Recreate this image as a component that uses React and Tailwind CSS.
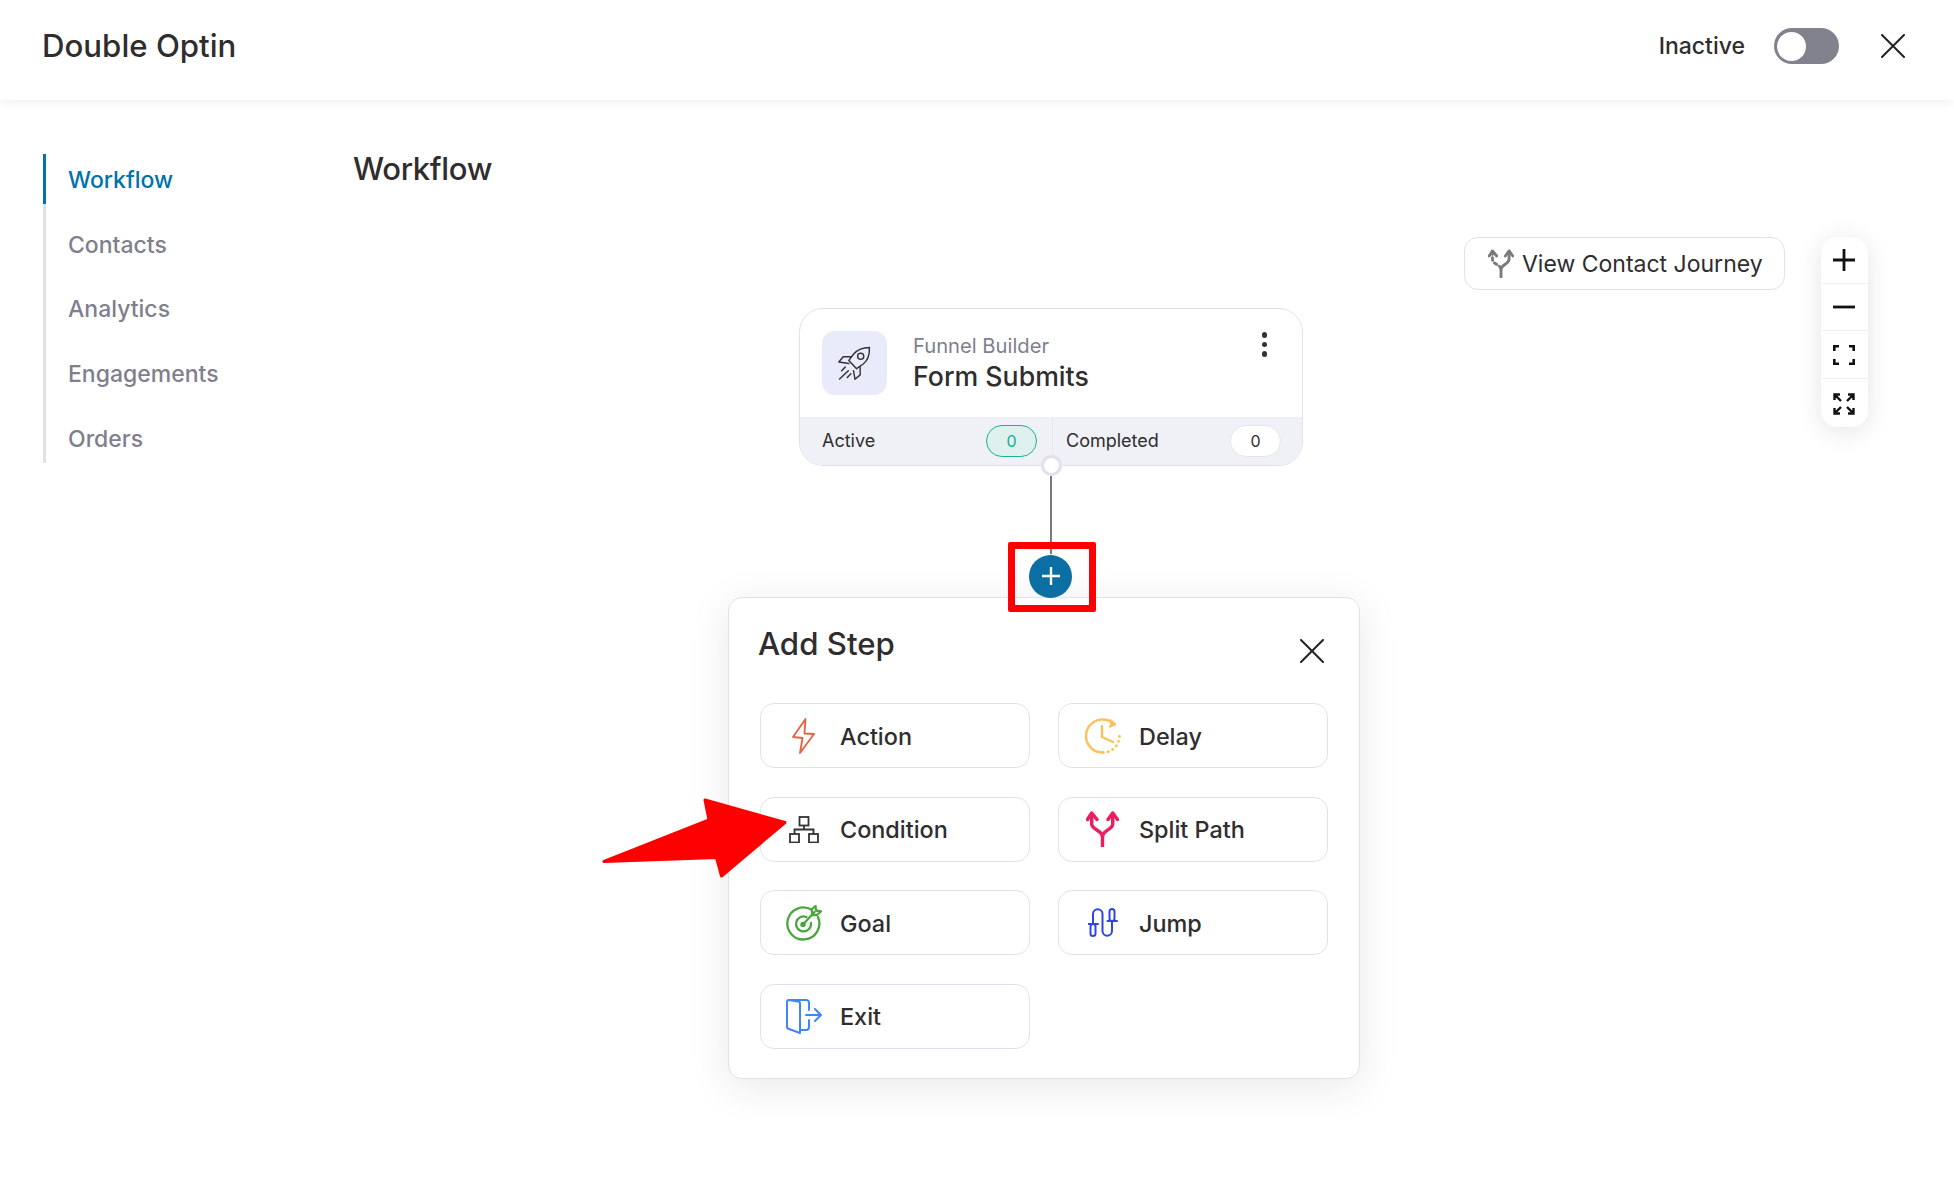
import React from "react";

const X = ({ className }) => (
  <svg viewBox="0 0 24 24" className={className} fill="none" stroke="#222" strokeWidth="2" strokeLinecap="round">
    <path d="M1 1L23 23M23 1L1 23" />
  </svg>
);

const Rocket = () => (
  <svg viewBox="0 0 32 33" className="w-[33px] h-[34px]" fill="none" stroke="#333" strokeWidth="1.4" strokeLinecap="round" strokeLinejoin="round">
    <path d="M30.5 1.5C24 1.5 19 3.5 15 8L10.5 14L18 22L24.5 17.5C29 14 30.8 9 30.5 1.5Z" />
    <circle cx="22" cy="10" r="3" />
    <path d="M13 10.5L5 10.5L0.8 15.5L10.5 17" />
    <path d="M21.5 20L21.5 28L16.5 32.3L15 24" />
    <path d="M7 20.5L3.5 24M10 24L1.5 32M12.5 27L9 30.5" />
  </svg>
);

const Bolt = () => (
  <svg viewBox="0 0 23 36" className="w-[23px] h-[36px]" fill="none" stroke="#e8603c" strokeWidth="1.8" strokeLinejoin="round">
    <path d="M13.5 1L1 19L10.5 20L8 35L22 16L12.5 15.5Z" />
  </svg>
);

const Network = () => (
  <svg viewBox="0 0 30 27" className="w-[30px] h-[27px]" fill="none" stroke="#333" strokeWidth="1.8">
    <rect x="10.5" y="1" width="9" height="8.5" />
    <rect x="1" y="18" width="9" height="8.5" />
    <rect x="20" y="18" width="9" height="8.5" />
    <path d="M15 9.5V13.5M5.5 18V13.5H24.5V18" />
  </svg>
);

const Clock = () => (
  <svg viewBox="0 0 36 36" className="w-[36px] h-[36px]" fill="none" stroke="#fcc15a" strokeWidth="2.4" strokeLinecap="round" strokeLinejoin="round">
    <path d="M29 6.2A16.5 16.5 0 1 0 18 34.5" />
    <path d="M18 34.5A16.5 16.5 0 0 0 34.5 18V15" strokeDasharray="0.5 4.5" strokeWidth="2.6" />
    <path d="M25.5 2.5L30 6.5L25 8.5" fill="#fcc15a" />
    <path d="M17 8V19L28 24" />
  </svg>
);

const Split = ({ className, color, dashed, width = 3.4 }) => (
  <svg viewBox="0 0 33 36" className={className} fill="none" stroke={color} strokeWidth={width} strokeLinecap="round" strokeLinejoin="round">
    <path d="M1.5 8.5L5.7 2L11 8.5" />
    <path d="M22 8.5L26.7 2L31.5 8.5" />
    <path d="M5.7 3V13C5.7 19 16.5 19 16.5 26" strokeDasharray={dashed ? "3.5 4" : undefined} />
    <path d="M26.7 3V13C26.7 19 16.5 19 16.5 26V35" />
  </svg>
);

const Goal = () => (
  <svg viewBox="0 0 36 36" className="w-[36px] h-[36px]" fill="none" stroke="#4ca63f" strokeWidth="2.3" strokeLinecap="round" strokeLinejoin="round">
    <path d="M26 5A16 16 0 1 0 32 12" />
    <path d="M20.5 12A7.5 7.5 0 1 0 25 18" />
    <circle cx="17" cy="19.5" r="1.6" fill="#4ca63f" />
    <path d="M17 19.5L28.5 7" />
    <path d="M26 9V4L29.5 1L30 5.5L35 6.5L31 10H26" />
  </svg>
);

const Jump = () => (
  <svg viewBox="0 0 30 29" className="w-[30px] h-[29px]" fill="none" stroke="#2f45e0" strokeWidth="2" strokeLinecap="round">
    <path d="M5 16V6A4.75 4.75 0 0 1 14.5 6V23A4.75 4.75 0 0 0 24 23V13" />
    <rect x="2.5" y="16" width="5" height="12" rx="2.5" />
    <rect x="21.5" y="1" width="5" height="12" rx="2.5" />
    <path d="M0.5 16H10M19.5 13H29" />
  </svg>
);

const Exit = () => (
  <svg viewBox="0 0 36 35" className="w-[36px] h-[35px]" fill="none" stroke="#3f86f7" strokeWidth="2" strokeLinecap="round" strokeLinejoin="round">
    <path d="M3 1H20A3 3 0 0 1 23 4V11" />
    <path d="M23 21V28A3 3 0 0 1 20 31H14" />
    <path d="M1 3A2 2 0 0 1 3 1L12 2.5A2 2 0 0 1 14 4.5V34L3 30A2.5 2.5 0 0 1 1 27.5Z" />
    <path d="M20 16H35M29 10L35 16L29 22" />
  </svg>
);

const Fit = () => (
  <svg viewBox="0 0 22 20" className="w-[22px] h-[20px]" fill="none" stroke="#111" strokeWidth="2.6">
    <path d="M1.3 6V1.3H6M16 1.3H20.7V6M1.3 14V18.7H6M16 18.7H20.7V14" />
  </svg>
);

const Expand = () => (
  <svg viewBox="0 0 22 22" className="w-[22px] h-[22px]" fill="none" stroke="#111" strokeWidth="2.4">
    <path d="M1.5 7V1.5H7M1.5 1.5L8 8M15 1.5H20.5V7M20.5 1.5L14 8M1.5 15V20.5H7M1.5 20.5L8 14M15 20.5H20.5V15M20.5 20.5L14 14" />
  </svg>
);

const StepButton = ({ icon, label, narrow }) => (
  <button className="h-[65px] flex items-center rounded-[14px] border border-[#e1e1ee] bg-white text-[23.4px] font-medium text-[#2f2d2e]">
    <span className={narrow ? "w-[79px] flex justify-center pl-[6px] shrink-0" : "w-[80px] flex justify-center pl-[7px] shrink-0"}>{icon}</span>
    <span className="pt-[2px]">{label}</span>
  </button>
);

const nav = ["Workflow", "Contacts", "Analytics", "Engagements", "Orders"];

export default function App() {
  return (
    <div className="relative h-[1204px] overflow-hidden bg-white font-['Inter',sans-serif] text-[#2f2d2e]">
      <header className="relative z-10 h-[100px] flex items-center justify-between pl-[42px] pr-[49px] pb-[8px] bg-white shadow-[0_2px_10px_rgba(40,40,60,0.08)]">
        <h1 className="pt-[1px] text-[31.2px] font-medium">Double Optin</h1>
        <div className="flex items-center">
          <span className="pt-[1px] text-[23px] font-medium">Inactive</span>
          <div className="ml-[29px] w-[65px] h-[36px] rounded-full bg-[#82828e] flex items-center pl-[3px]">
            <div className="w-[29px] h-[29px] rounded-full bg-white" />
          </div>
          <X className="ml-[42px] w-[24px] h-[24px]" />
        </div>
      </header>

      <div className="flex h-[1104px]">
        <aside className="w-[354px] shrink-0 pl-[43px] pt-[54px]">
          <nav className="flex flex-col gap-[14.8px] border-l-[3px] border-[#e1e1ee] text-[23px] font-medium text-[#7f7f8e]">
            {nav.map((n, i) => (
              <a key={n} className={i === 0 ? "h-[50px] flex items-center pl-[22px] pt-[2px] -ml-[3px] border-l-[3px] border-[#0073aa] text-[#0073aa]" : "h-[50px] flex items-center pl-[22px] pt-[2px] -ml-[3px] border-l-[3px] border-transparent"}>
                {n}
              </a>
            ))}
          </nav>
        </aside>

        <main className="relative flex-1 pt-[49px] pr-[86px]">
          <h2 className="-ml-[1px] text-[31px] leading-[40px] font-medium tracking-[-0.3px]">Workflow</h2>
          <div className="mt-[48px] flex justify-end items-start gap-[36px]">
            <button className="h-[53px] w-[321px] flex items-center gap-[9px] pl-[23px] rounded-[14px] border border-[#e1e1ee] bg-white text-[23px] text-[#2f2d2e]">
              <Split className="w-[26px] h-[29px]" color="#7a7a7a" dashed width={3.6} />
              <span className="pt-[2px] -ml-[1px]">View Contact Journey</span>
            </button>
            <div className="w-[47px] rounded-[16px] bg-white shadow-[0_4px_24px_rgba(40,40,60,0.12)] flex flex-col divide-y divide-[#f0f0f2]">
              <div className="h-[47px] pr-[2px] flex items-center justify-center">
                <svg viewBox="0 0 22 22" className="w-[22px] h-[22px]" stroke="#111" strokeWidth="2.8"><path d="M11 0V22M0 11H22" /></svg>
              </div>
              <div className="h-[47px] pr-[2px] flex items-center justify-center">
                <svg viewBox="0 0 22 4" className="w-[22px] h-[4px]" stroke="#111" strokeWidth="2.8"><path d="M0 2H22" /></svg>
              </div>
              <div className="h-[48px] pr-[2px] pt-[1px] flex items-center justify-center"><Fit /></div>
              <div className="h-[48px] pr-[2px] pt-[2px] flex items-center justify-center"><Expand /></div>
            </div>
          </div>

          {/* Trigger node on the workflow canvas */}
          <div className="absolute left-[445px] top-[208px] w-[504px] h-[158px] rounded-[24px] border border-[#e1e1ee] bg-white overflow-hidden flex flex-col">
            <div className="flex-1 flex pl-[22px] pr-[35px] pt-[22px]">
              <div className="w-[65px] h-[64px] rounded-[13px] bg-[#e9ebfb] flex items-center justify-center shrink-0">
                <Rocket />
              </div>
              <div className="ml-[26px] flex-1 pt-[1px]">
                <div className="text-[20.2px] leading-[28px] text-[#7f7f8e]">Funnel Builder</div>
                <div className="text-[26.7px] leading-[33px] font-medium">Form Submits</div>
              </div>
              <div className="flex flex-col gap-[4px] pt-[1px]">
                <span className="w-[5.5px] h-[5.5px] rounded-full bg-[#333]" />
                <span className="w-[5.5px] h-[5.5px] rounded-full bg-[#333]" />
                <span className="w-[5.5px] h-[5.5px] rounded-full bg-[#333]" />
              </div>
            </div>
            <div className="h-[48px] bg-[#f0f1f7] flex text-[18px]">
              <div className="w-[253px] flex items-center justify-between pl-[22px] pr-[15px] border-r border-[#e6e6ef]">
                <span className="pb-[2px]">Active</span>
                <span className="w-[51px] h-[32px] rounded-full border border-[#1bb394] bg-[#dff1ee] text-[#14b08f] text-[16px] flex items-center justify-center">0</span>
              </div>
              <div className="flex-1 flex items-center justify-between pl-[13px] pr-[21px]">
                <span className="pb-[2px]">Completed</span>
                <span className="w-[51px] h-[32px] rounded-full border border-[#e4e4ee] bg-white text-[16px] flex items-center justify-center">0</span>
              </div>
            </div>
          </div>

          {/* Connector */}
          <div className="absolute left-[696px] top-[376px] w-[2px] h-[78px] bg-[#7a7a7a]" />
          <div className="absolute left-[686.5px] top-[355px] w-[21px] h-[21px] rounded-full border-[3px] border-[#e1e1ee] bg-white" />

          {/* Add Step popover */}
          <div className="absolute left-[374px] top-[497px] w-[632px] h-[482px] rounded-[14px] border border-[#e1e1ee] bg-white shadow-[0_8px_40px_rgba(40,40,60,0.1)] pl-[31px] pr-[31px] pt-[25px]">
            <div className="flex items-start justify-between">
              <h3 className="-ml-[2px] text-[31.2px] leading-[42px] font-medium">Add Step</h3>
              <X className="mt-[16px] mr-[4px] w-[24px] h-[24px]" />
            </div>
            <div className="mt-[38px] grid grid-cols-2 gap-x-[28px] gap-y-[28.5px]">
              <StepButton narrow icon={<Bolt />} label="Action" />
              <StepButton icon={<Clock />} label="Delay" />
              <StepButton narrow icon={<Network />} label="Condition" />
              <StepButton icon={<Split className="w-[33px] h-[36px]" color="#ee1d5f" />} label="Split Path" />
              <StepButton narrow icon={<Goal />} label="Goal" />
              <StepButton icon={<Jump />} label="Jump" />
              <StepButton narrow icon={<Exit />} label="Exit" />
            </div>
          </div>

          {/* Plus node with red annotation box */}
          <div className="absolute left-[654px] top-[442px] w-[88px] h-[70px] border-[7px] border-[#ff0000] rounded-[2px] flex items-center justify-center">
            <div className="w-[43px] h-[43px] -ml-[3px] -mt-[2px] rounded-full bg-[#0b6fa4] flex items-center justify-center">
              <svg viewBox="0 0 18 18" className="w-[18px] h-[18px]" stroke="#fff" strokeWidth="2.4"><path d="M9 0V18M0 9H18" /></svg>
            </div>
          </div>
        </main>
      </div>

      {/* Red annotation arrow */}
      <svg className="absolute left-[600px] top-[797px] w-[190px] h-[82px]" viewBox="600 797 190 82">
        <path d="M785 822.5L705 800L709 820L604 861.5L716.5 857.5L721.5 876Z" fill="#ff0000" stroke="#ff0000" strokeWidth="3" strokeLinejoin="round" />
      </svg>
    </div>
  );
}
